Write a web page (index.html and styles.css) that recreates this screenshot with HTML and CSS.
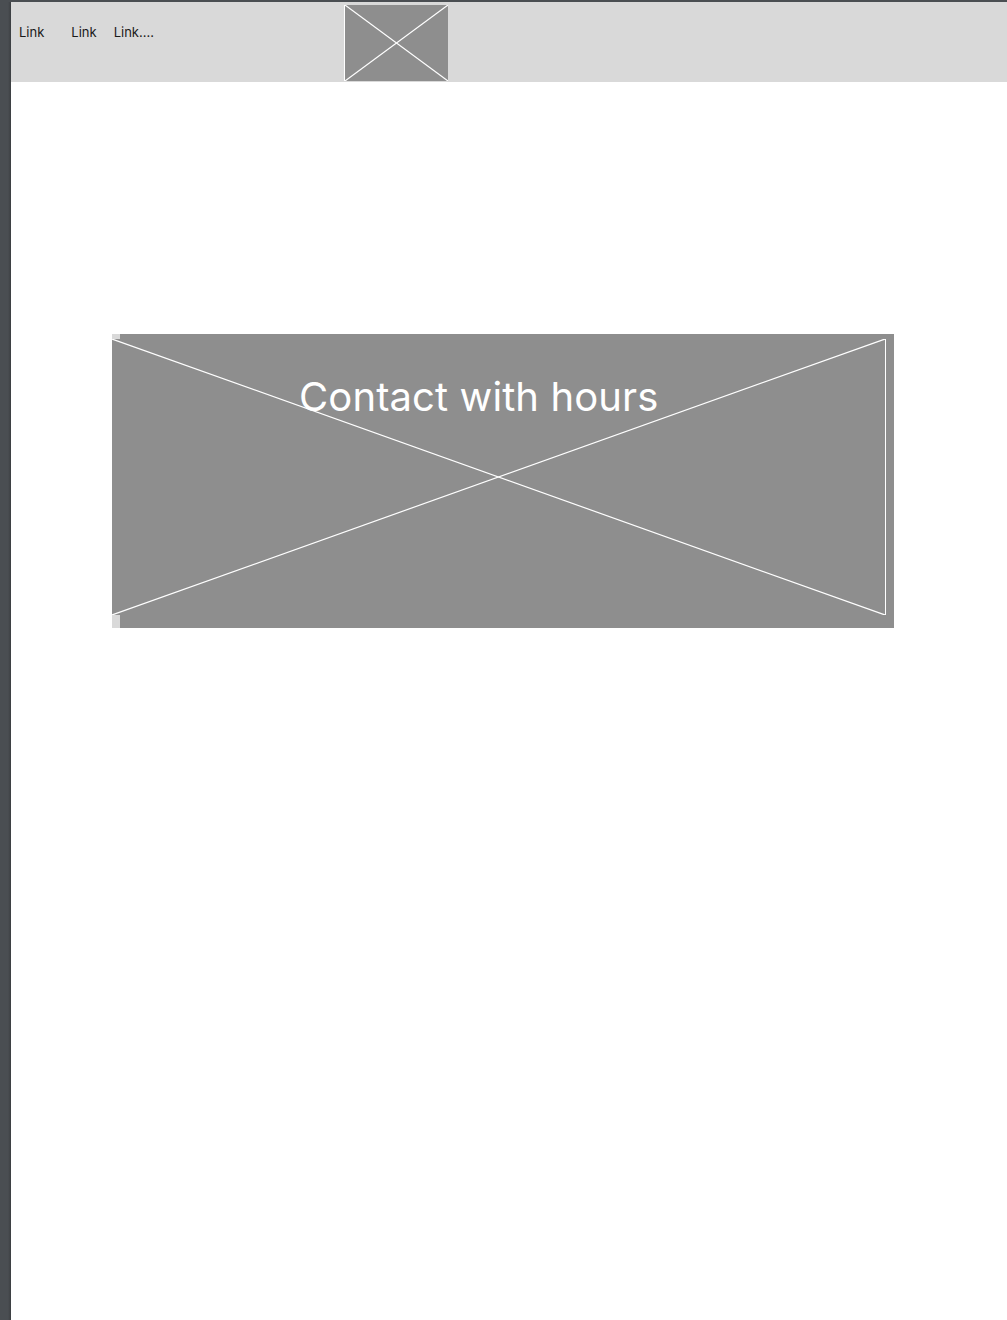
FILE: index.html
```html
<!DOCTYPE html>
<html lang="en">
<head>
  <meta charset="UTF-8">
  <meta name="viewport" content="width=device-width, initial-scale=1">
  <title>Contact</title>
  <link rel="stylesheet" href="styles.css">
</head>
<body>
  <div class="rail"></div>
  <div class="page">
    <header class="site-header">
      <nav class="nav">
        <a class="nav-link" href="#">Link</a>
        <a class="nav-link" href="#">Link</a>
        <a class="nav-link" href="#">Link....</a>
      </nav>
      <!-- Логотип-заглушка -->
      <div class="logo placeholder">
        <svg viewBox="0 0 100 100" preserveAspectRatio="none">
          <line x1="0" y1="0" x2="100" y2="100" />
          <line x1="100" y1="0" x2="0" y2="100" />
        </svg>
      </div>
    </header>

    <section class="contact">
      <div class="contact-box">
        <h2 class="contact-title">Contact with hours</h2>
      </div>
      <div class="contact-image placeholder">
        <svg viewBox="0 0 100 100" preserveAspectRatio="none">
          <line x1="0" y1="0" x2="100" y2="100" />
          <line x1="100" y1="0" x2="0" y2="100" />
        </svg>
      </div>
    </section>
  </div>
</body>
</html>
```

FILE: styles.css
```css
/* Общая разметка */
body {
  margin: 0;
  display: flex;
  min-height: 1320px;
  font-family: 'Inter', 'Noto Sans', sans-serif;
  background: #fff;
  border-top: 2px solid #4a4e52;
}
.rail {
  width: 11px;
  flex-shrink: 0;
  background: linear-gradient(to right, #4a4e52 0, #4a4e52 8px, #3b3e41 11px);
}
.page {
  flex: 1;
}

/* Шапка */
.site-header {
  height: 80px;
  background: #d9d9d9;
  display: flex;
  align-items: flex-start;
}
.nav {
  display: flex;
  padding: 22px 0 0 8px;
  width: 325px;
}
.nav-link {
  font-size: 13px;
  color: #1a1a1a;
  text-decoration: none;
  margin-right: 27px;
}
.nav-link:nth-child(2) {
  margin-right: 17px;
}

/* Заглушки изображений */
.placeholder {
  background: #8e8e8e;
}
.placeholder svg {
  display: block;
  width: 100%;
  height: 100%;
}
.placeholder line {
  stroke: #fff;
  stroke-width: 1.2;
  vector-effect: non-scaling-stroke;
}
.logo {
  width: 103px;
  height: 76px;
  margin-top: 3px;
  border-left: 1px solid #fff;
}

/* Блок контактов */
.contact {
  position: relative;
  width: 782px;
  height: 294px;
  margin: 252px 0 0 101px;
  background: #d9d9d9;
}
.contact-box {
  height: 100%;
  margin-left: 8px;
  background: #8e8e8e;
}
.contact-title {
  margin: 0;
  padding: 40px 0 0 179px;
  font-size: 40px;
  font-weight: 400;
  line-height: 46px;
  letter-spacing: 0.1px;
  color: #fff;
  position: relative;
  z-index: 1;
}
.contact-image {
  position: absolute;
  left: 0;
  top: 5px;
  width: 773px;
  height: 276px;
  border-right: 1px solid #fff;
}
```
